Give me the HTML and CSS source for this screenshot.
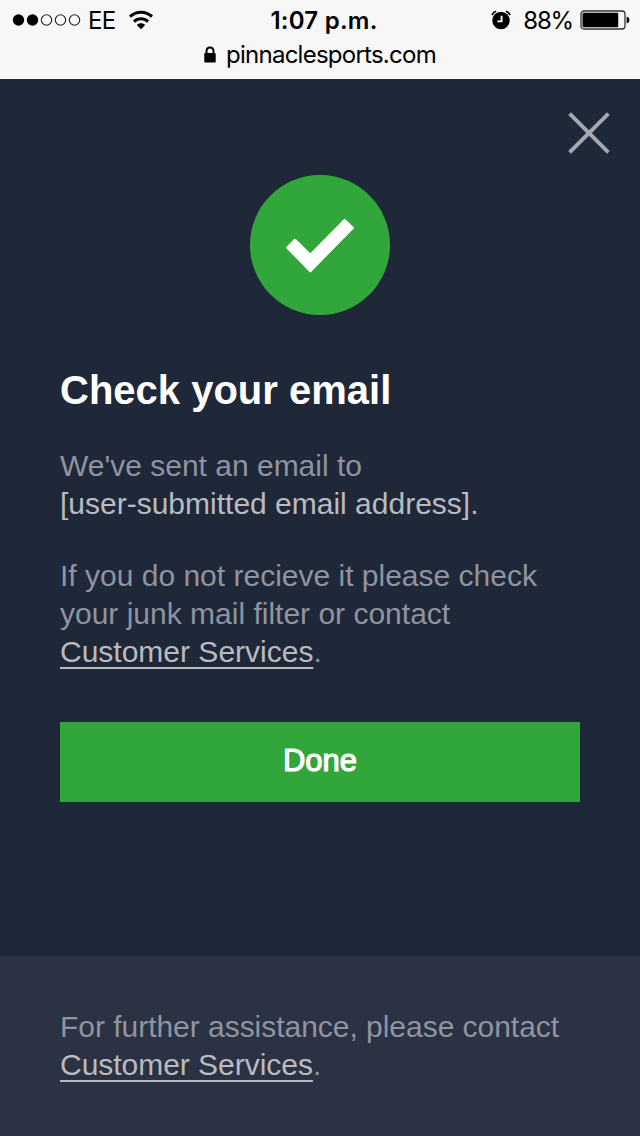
FILE: index.html
```
<!DOCTYPE html>
<html lang="en">
<head>
<meta charset="utf-8">
<title>Check your email</title>
<link rel="stylesheet" href="styles.css">
</head>
<body>
<header class="browser">
  <div class="status">
    <div class="carrier">
      <svg class="signal" width="70" height="14" viewBox="0 0 70 14"><circle cx="6.5" cy="7" r="5.7"/><circle cx="20.5" cy="7" r="5.7"/><g fill="none" stroke="#222" stroke-width="1.1"><circle cx="34.5" cy="7" r="5.2"/><circle cx="48.5" cy="7" r="5.2"/><circle cx="62.5" cy="7" r="5.2"/></g></svg>
      <span class="network">EE</span>
      <svg class="wifi" width="26" height="20" viewBox="0 0 26 20"><g fill="none" stroke="#000" stroke-width="3"><path d="M2 6.7C8.2.9 17.8.9 24 6.7"/><path d="M6 11.6C10 7.9 16 7.9 20 11.6"/></g><path d="M8.8 14.9C11.2 12.7 14.8 12.7 17.2 14.9L13 19.2Z"/></svg>
    </div>
    <div class="clock">1:07 p.m.</div>
    <div class="power">
      <svg class="alarm" width="20" height="20" viewBox="0 0 20 20"><circle cx="10" cy="10.5" r="8.7"/><path d="M.9 5.1Q2.2 2.1 5.2 1.2M14.8 1.2Q17.8 2.1 19.1 5.1" fill="none" stroke="#000" stroke-width="1.6"/><path d="M10.6 5.7V11.4H6.4" fill="none" stroke="#f7f7f7" stroke-width="1.9"/></svg>
      <span class="percent">88%</span>
      <svg class="battery" width="50" height="20" viewBox="0 0 50 20"><rect x="1" y="1" width="44" height="18" rx="3" fill="none" stroke="#333" stroke-width="1.3"/><rect x="2.5" y="2.7" width="35.7" height="14.6" rx="1"/><path d="M46.6 6.8Q49.4 7 49.4 10T46.6 13.2Z"/></svg>
    </div>
  </div>
  <div class="address">
    <svg class="lock" width="12" height="17" viewBox="0 0 12 17"><rect x=".3" y="7" width="11.4" height="9.4" rx=".7"/><path d="M2.5 8V5.2C2.5.1 9.5.1 9.5 5.2V8" fill="none" stroke="#000" stroke-width="2"/></svg>
    <span class="domain">pinnaclesports.com</span>
  </div>
</header>
<main class="dialog">
  <button class="close" aria-label="Close"><svg width="42" height="42" viewBox="0 0 42 42"><path d="M1.6 1.6L40.4 40.4M40.4 1.6L1.6 40.4" stroke="#a4a8af" stroke-width="4"/></svg></button>
  <svg class="success" width="140" height="140" viewBox="0 0 140 140"><circle cx="70" cy="70" r="70" fill="#31a73b"/><path d="M36.5 71.8L44.2 64.1Q45 63.3 45.8 64.1L60.3 78.3L93.8 44.2Q94.6 43.4 95.4 44.2L103.5 52.1Q104.3 53 103.5 53.8L61.3 96.7Q60.3 97.7 59.3 96.7L36.5 73.4Q35.6 72.6 36.5 71.8Z" fill="#fff"/></svg>
  <h1 class="title">Check your email</h1>
  <p class="copy">We've sent an email to<br><span class="recipient">[user-submitted email address].</span></p>
  <p class="copy">If you do not recieve it please check<br>your junk mail filter or contact<br><a class="link">Customer Services</a>.</p>
  <button class="done">Done</button>
</main>
<footer class="help">
  <p class="copy">For further assistance, please contact<br><a class="link">Customer Services</a>.</p>
</footer>
</body>
</html>
```

FILE: styles.css
```
* { box-sizing: border-box; }
body {
  margin: 0;
  height: 1136px;
  display: flex;
  flex-direction: column;
  background: #1f2838;
  font-family: "Liberation Sans", Arial, sans-serif;
}
svg { display: block; flex: none; }
.browser {
  height: 79px;
  flex: none;
  background: #f7f7f7;
  color: #000;
  font-family: Inter, sans-serif;
  white-space: nowrap;
}
.status {
  display: grid;
  grid-template-columns: 1fr 124px 1fr;
  height: 40px;
  padding: 0 10px 0 12px;
  align-items: center;
}
.carrier, .power { display: flex; align-items: center; }
.network { margin-left: 6px; font-size: 24px; letter-spacing: -0.8px; }
.wifi { margin-left: 13px; }
.clock {
  padding-left: 6px;
  text-align: center;
  font-size: 24px;
  font-weight: 600;
  letter-spacing: 0.25px;
}
.power { justify-content: flex-end; }
.percent { margin-left: 12px; font-size: 24px; letter-spacing: -1.2px; }
.battery { margin-left: 7px; }
.address {
  display: flex;
  justify-content: center;
  align-items: center;
  gap: 10px;
  height: 28px;
  font-size: 24px;
}
.domain { letter-spacing: -0.75px; }
.dialog {
  flex: 1;
  display: flex;
  flex-direction: column;
  padding: 33px 60px 0;
}
.close {
  align-self: flex-end;
  margin: 0 -30px 0 0;
  padding: 0;
  border: 0;
  background: none;
}
.success { align-self: center; margin-top: 21px; }
.title {
  margin: 52px 0 0;
  color: #fff;
  font-size: 40px;
  line-height: 46px;
}
.copy {
  margin: 0;
  color: #8f94a0;
  font-size: 30px;
  line-height: 38px;
}
.title + .copy { margin-top: 34px; }
.copy + .copy { margin-top: 34px; }
.recipient { color: #b9bbc0; }
.link {
  color: #b9bbc0;
  text-decoration: underline;
  text-decoration-thickness: 2px;
  text-underline-offset: 5px;
  text-decoration-skip-ink: none;
}
.done {
  height: 80px;
  margin: 51px 0 0;
  padding: 0 0 3px;
  border: 0;
  background: #31a73b;
  color: #fff;
  font: 31px "Liberation Sans", Arial, sans-serif;
  -webkit-text-stroke: 1.2px #fff;
}
.help {
  height: 180px;
  flex: none;
  padding: 52px 60px 0;
  background: #2a3243;
}
.help .copy { letter-spacing: -0.03px; }
```
